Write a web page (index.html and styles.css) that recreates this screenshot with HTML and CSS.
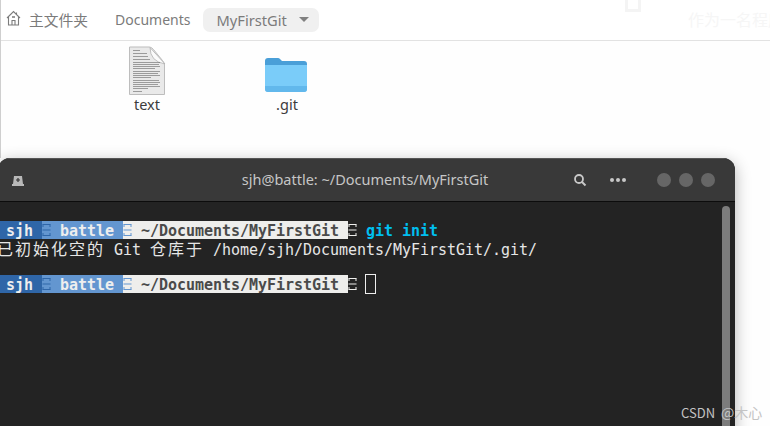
FILE: index.html
```html
<!DOCTYPE html>
<html lang="zh">
<head>
<meta charset="utf-8">
<title>MyFirstGit</title>
<link rel="stylesheet" href="styles.css">
</head>
<body>
<svg class="defs" width="0" height="0" aria-hidden="true">
  <symbol id="tofu" viewBox="0 0 9 18">
    <path d="M.5 3.500h8M.5 9h8M.5 14.500h8M1 3.500v2.500M8 3.500v2.500M1 12v2.500M8 12v2.500" fill="none" stroke="currentColor" stroke-width="1"/>
  </symbol>
</svg>
<main class="desktop">
  <section class="files">
    <header class="files-bar">
      <svg class="home" width="16" height="16" viewBox="0 0 16 16"><path d="M1 8 7.500 1.500 14 8M2.500 7v8h10V7M6 15v-4.500h3V15M10.500 2.500v2" fill="none" stroke="#7c7c7c" stroke-width="1.100"/><path d="M6 6h3v2H6z" fill="#9a9a9a"/></svg>
      <span class="crumb crumb-home">主文件夹</span>
      <span class="crumb crumb-docs">Documents</span>
      <span class="pill"><span>MyFirstGit</span><i class="caret"></i></span>
      <span class="ghost-mark"></span>
      <span class="ghost-text">作为一名程序</span>
    </header>
    <div class="file-grid">
      <figure class="file">
        <svg width="38" height="50" viewBox="0 0 38 50">
          <path d="M1.500 1h20q2 0 4 2.500l9 11q2 2.500 2 4.500v29.500H1.500z" fill="#e9e9e9" stroke="#bdbdbd"/>
          <path d="M22 1.500q0 14 15 16.500z" fill="#fbfbfb" stroke="#b0b0b0" stroke-width=".8"/>
          <g fill="#5c5c5c" opacity=".55">
            <rect x="5" y="4" width="7" height="1"/><rect x="5" y="7" width="14" height="1"/><rect x="5" y="10" width="15" height="1"/>
            <rect x="5" y="13" width="17" height="1"/><rect x="5" y="16" width="27" height="1"/><rect x="5" y="18" width="26" height="1"/>
            <rect x="5" y="20" width="27" height="1"/><rect x="5" y="22" width="22" height="1"/><rect x="5" y="25" width="27" height="1"/>
            <rect x="5" y="27" width="25" height="1"/><rect x="5" y="29" width="27" height="1"/><rect x="5" y="31" width="18" height="1"/>
            <rect x="5" y="34" width="26" height="1"/><rect x="5" y="36" width="27" height="1"/><rect x="5" y="38" width="25" height="1"/>
            <rect x="5" y="40" width="27" height="1"/><rect x="5" y="42" width="15" height="1"/><rect x="5" y="45" width="9" height="1"/>
          </g>
        </svg>
        <figcaption>text</figcaption>
      </figure>
      <figure class="file file-folder">
        <svg width="44" height="37" viewBox="0 0 44 37">
          <path d="M1 5a3 3 0 0 1 3-3h10a3 3 0 0 1 2 1l2 2h22a3 3 0 0 1 3 3v6H1z" fill="#4a9fd8"/>
          <path d="M1 9h42v24a3 3 0 0 1-3 3H4a3 3 0 0 1-3-3z" fill="#7accf9"/>
          <path d="M1 30h42v3a3 3 0 0 1-3 3H4a3 3 0 0 1-3-3z" fill="#62b8ec"/>
        </svg>
        <figcaption>.git</figcaption>
      </figure>
    </div>
  </section>

  <section class="term">
    <header class="term-bar">
      <svg class="tab-icon" width="12" height="12" viewBox="0 0 12 12"><path d="M2 1h8l1 8h1v2H0V9h1z" fill="#b8b8b8"/><path d="M6 3v4M4 5h4" stroke="#333" stroke-width="1.200"/></svg>
      <span class="term-title">sjh@battle: ~/Documents/MyFirstGit</span>
      <svg class="search" width="14" height="14" viewBox="0 0 14 14"><circle cx="6" cy="6" r="4" fill="none" stroke="#c8c8c8" stroke-width="1.800"/><path d="m9 9 3.500 3.500" stroke="#c8c8c8" stroke-width="2"/></svg>
      <span class="dots"><i></i><i></i><i></i></span>
      <span class="winbtns"><i></i><i></i><i></i></span>
    </header>
    <div class="term-body">
      <div class="line">
        <span class="seg seg-user">&nbsp;sjh&nbsp;</span><svg class="sep sep-a" width="9" height="18"><use href="#tofu"/></svg><span class="seg seg-host">&nbsp;battle&nbsp;</span><svg class="sep sep-b" width="9" height="18"><use href="#tofu"/></svg><span class="seg seg-path">&nbsp;~/Documents/MyFirstGit&nbsp;</span><svg class="sep sep-c" width="9" height="18"><use href="#tofu"/></svg><span class="seg cmd">&nbsp;git init</span>
      </div>
      <div class="line output"><span class="cjk">已初始化空的</span> Git <span class="cjk">仓库于</span> /home/sjh/Documents/MyFirstGit/.git/</div>
      <div class="line"></div>
      <div class="line">
        <span class="seg seg-user">&nbsp;sjh&nbsp;</span><svg class="sep sep-a" width="9" height="18"><use href="#tofu"/></svg><span class="seg seg-host">&nbsp;battle&nbsp;</span><svg class="sep sep-b" width="9" height="18"><use href="#tofu"/></svg><span class="seg seg-path">&nbsp;~/Documents/MyFirstGit&nbsp;</span><svg class="sep sep-c" width="9" height="18"><use href="#tofu"/></svg><span class="cursor"></span>
      </div>
      <div class="scrollbar"></div>
    </div>
  </section>
  <span class="watermark">CSDN <span class="wm-cjk">@木心</span></span>
</main>
</body>
</html>
```

FILE: styles.css
```css
* { box-sizing: border-box; }
html, body { margin: 0; padding: 0; height: 100%; }
body { background: #fff; overflow: hidden; font-family: "Noto Sans", "Noto Sans CJK SC", sans-serif; }
.defs { position: absolute; }
.desktop { position: relative; width: 770px; height: 426px; overflow: hidden; background: #fefefe; }

.files { position: absolute; left: 0; top: 0; width: 770px; height: 158px; border-left: 1px solid #cfcfcf; }
.files-bar { position: relative; display: flex; align-items: center; height: 41px; border-bottom: 1px solid #e2e2e2; padding: 0 0 1px 5px; background: #fff; overflow: hidden; color: #7b7b7b; font-size: 14px; }
.home { flex: none; margin-bottom: 4px; }
.crumb-home { margin-left: 7px; font-family: "Noto Sans CJK SC", sans-serif; font-size: 14.750px; }
.crumb-docs { margin-left: 27px; }
.pill { display: flex; align-items: center; margin-left: 13px; width: 116px; height: 24px; padding-left: 13px; border-radius: 7px; background: #f0f0f0; font-size: 14.700px; }
.caret { margin-left: 12px; border: 5px solid transparent; border-top: 5px solid #808080; border-bottom: 0; }
.ghost-mark { position: absolute; left: 624px; top: -4px; width: 16px; height: 16px; border: 3px solid #f4f4f4; }
.ghost-text { position: absolute; left: 687px; top: 7px; font-family: "Noto Sans CJK SC", sans-serif; font-size: 16px; color: #f6f6f6; white-space: nowrap; }

.file-grid { display: flex; padding: 5px 0 0 76px; }
.file { display: flex; flex-direction: column; align-items: center; width: 140px; margin: 0; }
.file svg { display: block; }
.file figcaption { margin-top: -1px; font-size: 14.500px; line-height: 18px; color: #3c3c3c; }
.file-folder { padding-top: 10px; }
.file-folder figcaption { margin-top: 2px; }
.file-folder svg { margin-left: -2px; }

.term { position: absolute; left: -2px; top: 158px; width: 737px; height: 290px; border-radius: 12px 12px 0 0; background: #232323; box-shadow: 0 4px 16px rgba(0, 0, 0, .3); overflow: hidden; }
.term-bar { position: relative; display: flex; align-items: center; height: 44px; border-top: 1px solid #555; border-bottom: 1px solid #0c0c0c; background: #393939; color: #c6c6c6; }
.tab-icon { position: absolute; left: 14px; top: 16px; }
.term-title { position: absolute; left: 0; width: 734px; text-align: center; font-size: 14.500px; top: 10px; }
.search { margin-left: 575px; }
.dots { display: flex; gap: 2px; margin-left: 23px; }
.dots i { width: 4px; height: 4px; border-radius: 50%; background: #c8c8c8; }
.winbtns { display: flex; gap: 8px; margin-left: 31px; }
.winbtns i { width: 14px; height: 14px; border-radius: 50%; background: #666; }

.term-body { position: relative; height: 246px; padding: 19px 0 0 0; margin-left: -1px; font-family: "DejaVu Sans Mono", monospace; font-size: 15px; color: #e6e6e6; }
.line { display: flex; height: 18px; line-height: 18px; white-space: pre; width: 900px; letter-spacing: -0.030px; }
.seg { font-weight: 700; line-height: 16px; padding-top: 2px; }
.seg-user { background: #2f66a8; color: #eee; }
.seg-host { background: #6396d0; color: #eee; }
.seg-path { background: #eeeeec; color: #4a4a4a; }
.cmd { color: #00bfef; }
.sep { flex: none; display: block; }
.sep-a { background: #6396d0; color: #2f66a8; }
.sep-b { background: #eeeeec; color: #6396d0; }
.sep-c { color: #eeeeec; }
.output { display: block; }
.cjk { font-family: "Noto Sans CJK SC", sans-serif; font-size: 16px; letter-spacing: 2px; }
.cursor { width: 11px; height: 20px; margin: -1px 0 0 8px; border: 1px solid #eee; flex: none; }
.scrollbar { position: absolute; left: 725px; top: 4px; bottom: -4px; width: 8px; border-radius: 4px 4px 0 0; background: #7c7c7c; }
.watermark { position: absolute; left: 681px; top: 403px; font-family: "Noto Sans CJK SC", sans-serif; font-size: 13px; line-height: 18px; color: #c4c4c4; white-space: nowrap; }
.wm-cjk { font-size: 14px; margin-left: 3px; }
```
